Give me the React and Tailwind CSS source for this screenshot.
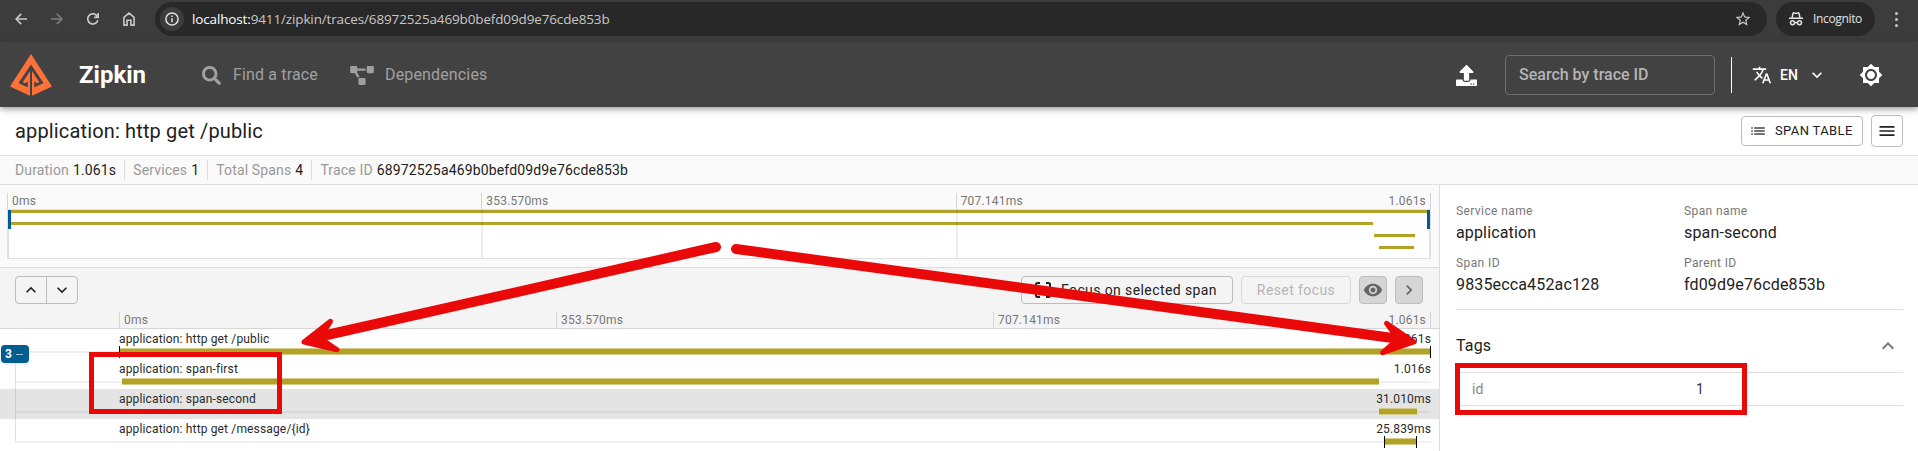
import { FaSearch, FaProjectDiagram, FaUpload } from "react-icons/fa";
import { MdTranslate, MdBrightness7, MdList, MdMenu, MdKeyboardArrowUp, MdKeyboardArrowDown, MdKeyboardArrowRight, MdStarBorder, MdVisibility } from "react-icons/md";

const OLIVE = "#b2a327";

function BrowserBar() {
  return (
    <div className="flex h-[43px] shrink-0 items-start border-b border-[#474747] bg-[#3c3c3c] pt-0.5 text-[#c8c8c8]">
      <div className="flex h-[34px] w-[155px] items-center">
        <svg className="ml-[15px] size-3" viewBox="0 0 12 12" fill="none" stroke="currentColor" strokeWidth="1.7"><path d="M12 6H1.2M6.2 .8 1.1 6l5.1 5.2" /></svg>
        <svg className="ml-6 size-3 text-[#7b7b7b]" viewBox="0 0 12 12" fill="none" stroke="currentColor" strokeWidth="1.7"><path d="M0 6h10.8M5.8 .8 10.9 6l-5.1 5.2" /></svg>
        <svg className="ml-6 size-3" viewBox="0 0 12 12" fill="none" stroke="currentColor" strokeWidth="1.7"><path d="M10.8 7.2A5.1 5.1 0 1 1 9.8 2.6L11 4M11.2 0v4.3H7" /></svg>
        <svg className="ml-6 h-3.5 w-3" viewBox="0 0 12 14" fill="none" stroke="currentColor" strokeWidth="1.6"><path d="M.9 13.1V5.3L6 1.1l5.1 4.2v7.8H7.9V8.3H4.1v4.8z" /></svg>
      </div>
      <div className="flex h-[34px] w-[1612px] items-center rounded-full bg-[#282828] pl-[5px] pr-[15px]">
        <div className="flex size-6 items-center justify-center rounded-full bg-[#3c3c3c]">
          <svg className="size-3.5" viewBox="0 0 14 14" fill="none" stroke="#e0e0e0" strokeWidth="1.5"><circle cx="7" cy="7" r="6.1" /><path d="M7 6.2v4M7 3.6v1.4" /></svg>
        </div>
        <div className="ml-2 grow whitespace-nowrap font-['Open_Sans',sans-serif] text-[13.5px] tracking-[-0.14px] text-[#c7c7c7]">
          <span className="text-white">localhost:</span>9411/zipkin/traces/68972525a469b0befd09d9e76cde853b
        </div>
        <MdStarBorder className="size-[18px]" />
      </div>
      <div className="ml-[9px] flex h-[34px] w-[99px] items-center rounded-full bg-[#282828] pl-[13px] text-[#e3e3e3]">
        <svg className="h-3.5 w-[14px]" viewBox="0 0 14 14" fill="none" stroke="currentColor" strokeWidth="1.5">
          <path d="M0 6.2h14M3 6l1-4.6c.1-.5.5-.6.9-.5L7 1.5 9.100 .9c.4-.1.8 0 .9.500L11 6" />
          <circle cx="3.500" cy="10.700" r="2" /><circle cx="10.500" cy="10.700" r="2" /><path d="M5.500 10.600h3" />
        </svg>
        <span className="ml-[10px] font-['Open_Sans',sans-serif] text-xs tracking-[-0.35px]">Incognito</span>
      </div>
      <div className="ml-[20px] flex h-[34px] flex-col items-center justify-center gap-[3px]">
        <i className="size-[3px] rounded-full bg-[#c8c8c8]" /><i className="size-[3px] rounded-full bg-[#c8c8c8]" /><i className="size-[3px] rounded-full bg-[#c8c8c8]" />
      </div>
    </div>
  );
}

function Header() {
  return (
    <header className="relative z-10 flex h-16 shrink-0 items-center bg-[#424242] shadow-[0px_2px_4px_-1px_rgba(0,0,0,0.2),0px_4px_5px_0px_rgba(0,0,0,0.14),0px_1px_10px_0px_rgba(0,0,0,0.12)]">
      <svg className="ml-[10px] h-[42px] w-[42px]" viewBox="0 0 42 42">
        <path d="M21 0 42 32.500 21.500 42H20.500L0 32.500z" fill="#fe7139" />
        <path d="M21 10.500 8.500 29l9.300 4.500v-3h6.400v3l9.300-4.500z" fill="#424242" />
        <path d="M21 15.500 12.800 28l1.700 1.500 3.300-2V35h6.400v-7.500l3.300 2 1.700-1.500z" fill="#fe7139" />
        <path d="M20 14h2v28h-2z" fill="#424242" />
      </svg>
      <div className="ml-[27px] w-[66px] whitespace-nowrap text-2xl font-bold text-white">Zipkin</div>
      <nav className="ml-[57px] flex grow items-center text-base tracking-[0.15px] text-[#a0a0a0]">
        <FaSearch className="size-[19px]" />
        <span className="ml-3 w-[84px] whitespace-nowrap">Find a trace</span>
        <FaProjectDiagram className="ml-[33px] h-[19px] w-6" />
        <span className="ml-[11px] whitespace-nowrap">Dependencies</span>
      </nav>
      <FaUpload className="size-[21px] text-white" />
      <div className="ml-7 flex h-10 w-[210px] items-center rounded border border-[#6e6e6e] pl-[13px] text-base font-medium text-[#b5b5b5]">Search by trace ID</div>
      <div className="ml-4 h-9 w-px bg-white" />
      <MdTranslate className="ml-[20px] size-5 text-white" />
      <span className="ml-[8px] w-[18px] text-sm font-medium tracking-[0.1px] text-white">EN</span>
      <MdKeyboardArrowDown className="ml-[9px] size-5 text-white" />
      <MdBrightness7 className="ml-[32px] mr-[35px] size-6 text-white" />
    </header>
  );
}

function Stat({ label, value, last }) {
  return (
    <div className={last ? "flex h-5 items-center gap-1 pl-2" : "flex h-5 items-center gap-1 border-r border-[#dcdcdc] px-2"}>
      <span className="text-[#999]">{label}</span><span className="text-[#222]">{value}</span>
    </div>
  );
}

function TitleBar() {
  return (
    <>
      <div className="flex h-[49px] shrink-0 items-center border-b border-[#e0e0e0] bg-white pl-[15px] pr-[15px]">
        <h1 className="grow text-xl tracking-[0.15px] text-[#212121]">application: http get /public</h1>
        <button className="flex h-[30px] w-[122px] items-center whitespace-nowrap rounded border border-[#bdbdbd] pl-[7px] text-[13px] tracking-[0.37px] text-[#222]">
          <MdList className="size-[18px] text-[#444]" /><span className="ml-2">SPAN TABLE</span>
        </button>
        <button className="ml-2 flex size-8 items-center justify-center rounded border border-[#bdbdbd] text-[#222]"><MdMenu className="size-5" /></button>
      </div>
      <div className="flex h-[29px] shrink-0 items-center border-b border-[#e0e0e0] bg-[#fafafa] pl-[7px] text-sm tracking-[0.15px]">
        <Stat label="Duration" value="1.061s" />
        <Stat label="Services" value="1" />
        <Stat label="Total Spans" value="4" />
        <Stat label="Trace ID" value="68972525a469b0befd09d9e76cde853b" last />
      </div>
    </>
  );
}

function Ticks() {
  return (
    <div className="grid h-4 grid-cols-3 items-center border-r border-[#d6d6d6] text-xs tracking-[0.2px] text-[#777]">
      <div className="flex h-4 items-center border-l border-[#d6d6d6] pl-1">0ms</div>
      <div className="flex h-4 items-center border-l border-[#d6d6d6] pl-1">353.570ms</div>
      <div className="flex h-4 items-center justify-between border-l border-[#d6d6d6] pl-1 pr-1"><span>707.141ms</span><span>1.061s</span></div>
    </div>
  );
}

function MiniMap() {
  return (
    <div className="h-[83px] shrink-0 border-b border-[#dcdcdc] bg-[#fafafa] pl-[7px] pr-2 pt-2">
      <Ticks />
      <svg className="block h-[50px] w-[1424px]" viewBox="0 0 1424 50" shapeRendering="crispEdges">
        <rect width="1424" height="50" fill="#e0e0e0" />
        <rect x="2" y="1" width="1420" height="48" fill="#fff" />
        <rect x="1" y="1" width="1421" height="3" fill={OLIVE} />
        <rect x="1" y="13" width="1365" height="3" fill={OLIVE} />
        <rect x="1367" y="25" width="41" height="3" fill={OLIVE} />
        <rect x="1372" y="37" width="35" height="3" fill={OLIVE} />
        <rect x="474" y="1" width="2" height="48" fill="#000" opacity=".07" />
        <rect x="949" y="1" width="2" height="48" fill="#000" opacity=".07" />
        <rect x="1" y="1" width="3" height="19" fill="#005d8f" />
        <rect x="1420" y="1" width="3" height="19" fill="#005d8f" />
      </svg>
    </div>
  );
}

function Toolbar() {
  return (
    <div className="flex h-[61px] shrink-0 flex-col justify-between border-b border-[#d6d6d6] bg-[#f4f4f4] pt-2">
      <div className="flex h-7 items-center pl-[15px] pr-4">
        <div className="flex h-7 w-[63px] rounded border border-[#bdbdbd] text-[#222]">
          <div className="flex w-[31px] items-center justify-center border-r border-[#bdbdbd]"><MdKeyboardArrowUp className="size-5" /></div>
          <div className="flex w-[30px] items-center justify-center"><MdKeyboardArrowDown className="size-5" /></div>
        </div>
        <div className="grow" />
        <div className="flex h-7 w-[212px] items-center whitespace-nowrap rounded border border-[#bdbdbd] pl-[12px] text-sm tracking-[0.4px] text-[#222]">
          <svg className="h-4 w-[18px]" viewBox="0 0 18 16" fill="none" stroke="currentColor" strokeWidth="2"><path d="M2 5V2.500Q2 1 3.500 1H6M12 1h2.500Q16 1 16 2.500V5M16 11v2.500Q16 15 14.500 15H12M6 15H3.500Q2 15 2 13.500V11" /></svg>
          <span className="ml-[9px]">Focus on selected span</span>
        </div>
        <div className="ml-2 flex h-7 w-[110px] items-center justify-center whitespace-nowrap rounded border border-[#dadada] text-sm tracking-[0.4px] text-[#b5b5b5]">Reset focus</div>
        <div className="ml-2 flex size-7 items-center justify-center rounded border border-[#bdbdbd] bg-[#d6d6d6] text-[#666]"><MdVisibility className="size-5" /></div>
        <div className="ml-2 flex size-7 items-center justify-center rounded border border-[#bdbdbd] bg-[#d6d6d6] text-[#666]"><MdKeyboardArrowRight className="size-5" /></div>
      </div>
      <div className="pl-[119px] pr-2"><Ticks /></div>
    </div>
  );
}

const spans = [
  { name: "application: http get /public", time: "1.061s", x: 0, w: 1312, marks: true },
  { name: "application: span-first", time: "1.016s", x: 3, w: 1257 },
  { name: "application: span-second", time: "31.010ms", x: 1260, w: 38, selected: true },
  { name: "application: http get /message/{id}", time: "25.839ms", x: 1265, w: 33, marks: true },
];

function SpanRow({ span, index }) {
  const line = span.selected ? "#d7d7d7" : "#f0f0f0";
  const tree = span.selected ? "#cfcfcf" : "#e0e0e0";
  return (
    <div className={span.selected ? "flex h-[30px] shrink-0 bg-[#e4e4e4]" : "flex h-[30px] shrink-0 bg-white"}>
      <svg className="h-[30px] w-[119px] shrink-0" viewBox="0 0 119 30" shapeRendering="crispEdges">
        <rect x="15" y="22" width="104" height="2" fill={line} />
        {index > 0 && <rect x="15" y="0" width="1" height={index === 3 ? 24 : 30} fill={tree} />}
        {index === 0 && <rect x="15" y="23" width="1" height="7" fill={tree} />}
      </svg>
      <div className="flex w-[1312px] flex-col">
        <div className="flex h-[17px] items-center justify-between pt-[3px] text-xs tracking-[0.15px] text-[#2a2a2a]"><span>{span.name}</span><span>{span.time}</span></div>
        <svg className="h-[13px] w-[1312px]" viewBox="0 0 1312 13" shapeRendering="crispEdges">
          <rect y="5" width="1312" height="2" fill={line} />
          <rect x={span.x} y="2" width={span.w} height="7" fill="#d5cc8b" />
          <rect x={span.x} y="3" width={span.w} height="5" fill={OLIVE} />
          {span.marks && <><rect x={span.x} y="0" width="1" height="12" fill="#000" /><rect x={span.x + span.w - 1} y="0" width="1" height="12" fill="#000" /></>}
        </svg>
      </div>
    </div>
  );
}

function Field({ label, value }) {
  return (
    <div className="flex h-[52px] flex-col">
      <span className="h-[19px] text-xs leading-[18px] tracking-[0.4px] text-[#777]">{label}</span>
      <span className="h-6 text-base leading-6 tracking-[0.15px] text-[#222]">{value}</span>
    </div>
  );
}

function Detail() {
  return (
    <aside className="w-[478px] bg-white pl-4 pr-[15px] pt-[17px]">
      <div className="grid grid-cols-[228px_1fr] border-b border-[#e0e0e0] pb-[3px]">
        <Field label="Service name" value="application" />
        <Field label="Span name" value="span-second" />
        <Field label="Span ID" value="9835ecca452ac128" />
        <Field label="Parent ID" value="fd09d9e76cde853b" />
      </div>
      <div className="flex h-[62px] items-center justify-between pr-[3px] pt-[9px] text-base tracking-[0.15px] text-[#222]"><span>Tags</span><MdKeyboardArrowUp className="size-6 text-[#777]" /></div>
      <div className="flex h-[34px] items-center border-y border-[#e0e0e0] pl-4 text-sm text-[#888]">
        <span className="w-[224px]">id</span><span className="text-[#334]">1</span>
      </div>
    </aside>
  );
}

function Annotations() {
  return (
    <svg className="pointer-events-none absolute inset-0 z-20 h-[451px] w-[1918px]" viewBox="0 0 1918 451" fill="none" stroke="#ea0909">
      <rect x="91.500" y="354.500" width="188" height="57" strokeWidth="5" />
      <rect x="1457.500" y="365.500" width="287" height="47" strokeWidth="5" />
      <path d="M716 247 318 337" strokeWidth="10" strokeLinecap="round" />
      <path d="M304 342 330.500 321.300 320 338 337 349.700z" fill="#ea0909" strokeWidth="5" strokeLinejoin="round" />
      <path d="M736 249 1400 339" strokeWidth="10" strokeLinecap="round" />
      <path d="M1414 342 1386.500 323.300 1398 339 1382.500 352.700z" fill="#ea0909" strokeWidth="5" strokeLinejoin="round" />
    </svg>
  );
}

export default function App() {
  return (
    <div className="relative flex h-[451px] w-[1918px] flex-col overflow-hidden bg-white font-['Roboto',sans-serif]">
      <BrowserBar />
      <Header />
      <TitleBar />
      <main className="flex min-h-0 grow">
        <section className="flex w-[1440px] shrink-0 flex-col border-r border-[#dcdcdc]">
          <MiniMap />
          <Toolbar />
          <div className="relative">
            {spans.map((s, i) => <SpanRow key={s.name} span={s} index={i} />)}
            <div className="absolute left-px top-4 flex h-[18px] w-[28px] items-center gap-1 rounded bg-[#005d8f] pl-1 text-xs font-bold text-white shadow">
              3<i className="h-px w-[7px] bg-[#9fc3d8]" />
            </div>
          </div>
        </section>
        <Detail />
      </main>
      <Annotations />
    </div>
  );
}
